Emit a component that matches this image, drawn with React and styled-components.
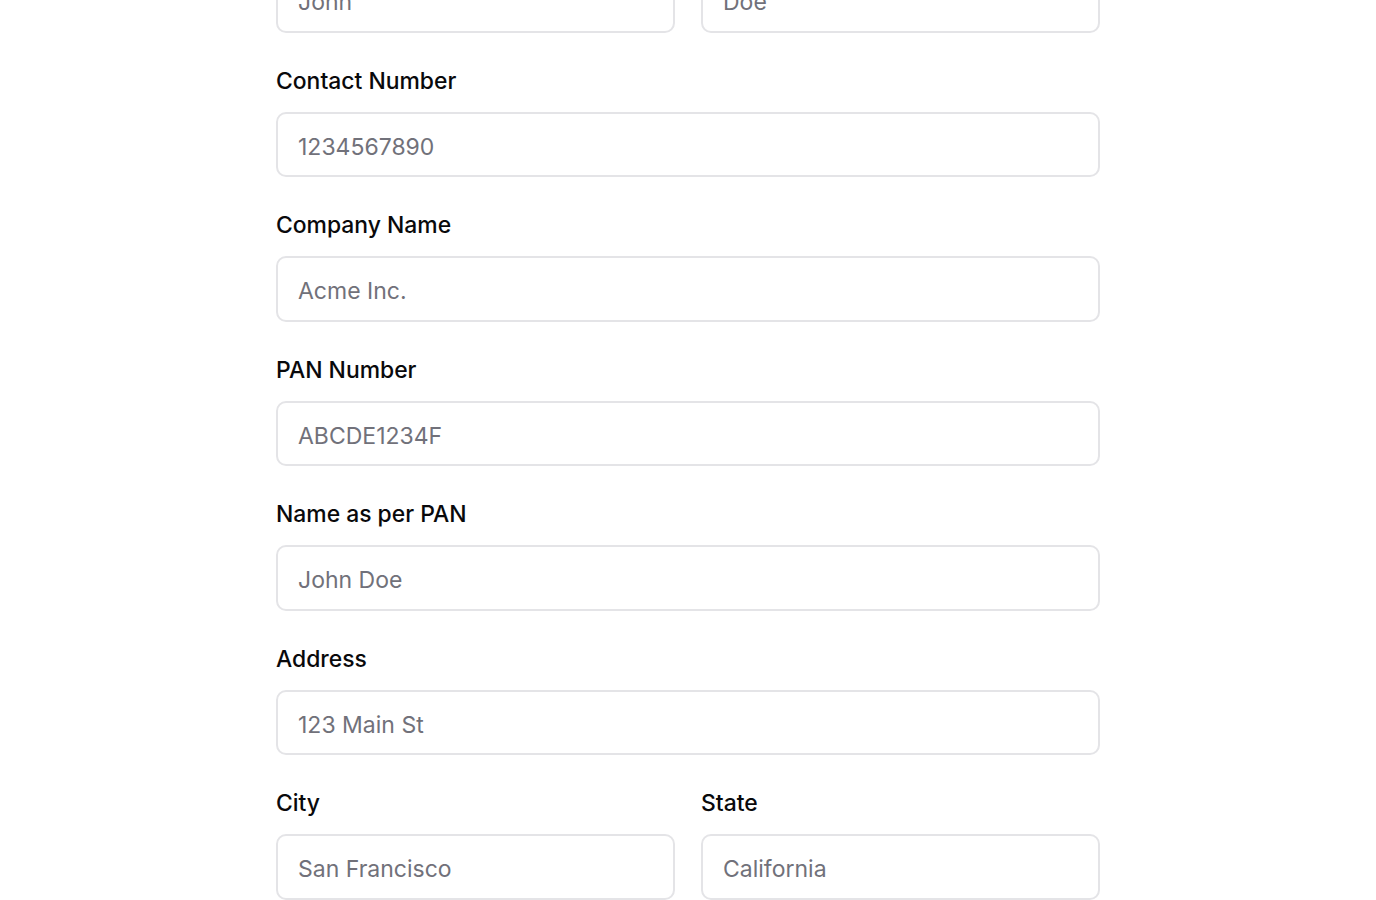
import styled, { createGlobalStyle } from "styled-components";

const GlobalStyle = createGlobalStyle`
  html, body {
    margin: 0;
    padding: 0;
    background: #ffffff;
    font-family: Inter, "Noto Sans", sans-serif;
    overflow: hidden;
  }
`;

const Page = styled.div`
  display: flex;
  justify-content: center;
`;

const Form = styled.form`
  width: 824px;
  margin-top: -76px;
  display: flex;
  flex-direction: column;
  gap: 36px;
`;

const Row = styled.div`
  display: grid;
  grid-template-columns: 1fr 1fr;
  gap: 26px;
`;

const Field = styled.div`
  display: flex;
  flex-direction: column;
  gap: 19px;
`;

const Label = styled.label`
  font-size: 22.9px;
  line-height: 24px;
  font-weight: 500;
  color: #09090b;
`;

const Input = styled.input`
  box-sizing: border-box;
  height: 65.5px;
  width: 100%;
  padding: 5px 20px 0;
  border: 2px solid #e4e4e7;
  border-radius: 10px;
  background: #ffffff;
  font-family: Inter, "Noto Sans", sans-serif;
  font-size: 23px;
  color: #09090b;
  outline: none;

  &::placeholder {
    color: #71717a;
  }
`;

const TextField = ({ label, placeholder }) => (
  <Field>
    <Label>{label}</Label>
    <Input placeholder={placeholder} />
  </Field>
);

export default function App() {
  return (
    <>
      <GlobalStyle />
      <Page>
        <Form>
          <Row>
            <TextField label="First Name" placeholder="John" />
            <TextField label="Last Name" placeholder="Doe" />
          </Row>
          <TextField label="Contact Number" placeholder="1234567890" />
          <TextField label="Company Name" placeholder="Acme Inc." />
          <TextField label="PAN Number" placeholder="ABCDE1234F" />
          <TextField label="Name as per PAN" placeholder="John Doe" />
          <TextField label="Address" placeholder="123 Main St" />
          <Row>
            <TextField label="City" placeholder="San Francisco" />
            <TextField label="State" placeholder="California" />
          </Row>
        </Form>
      </Page>
    </>
  );
}
